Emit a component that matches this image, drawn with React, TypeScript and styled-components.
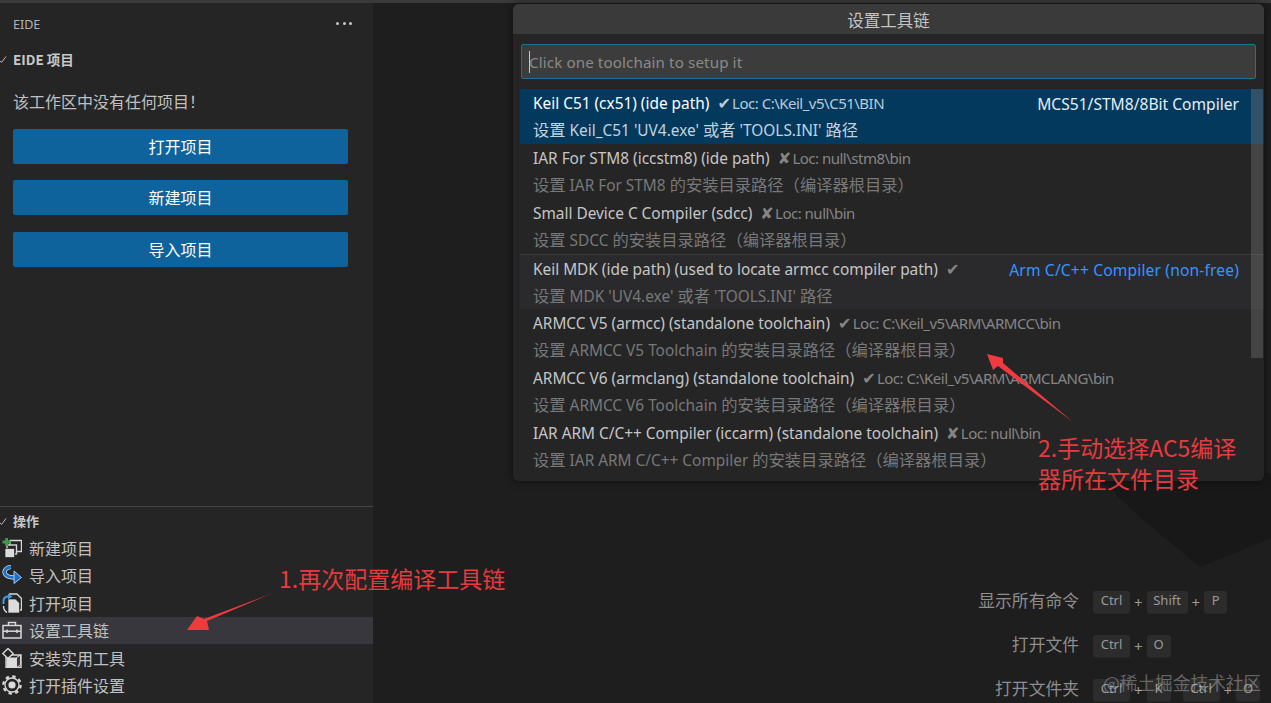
import React from "react";
import styled, { createGlobalStyle } from "styled-components";

const Global = createGlobalStyle`
  html, body, #root { margin: 0; padding: 0; width: 100%; height: 100%; overflow: hidden; background: #1e1e1e; }
  * { box-sizing: border-box; }
  body { font-family: "Noto Sans", "Noto Sans CJK SC", sans-serif; }
`;

const cjk = `"Noto Sans CJK SC", "Noto Sans", sans-serif`;

const Page = styled.div`
  position: relative; width: 1271px; height: 703px; overflow: hidden;
  display: flex; flex-direction: column; background: #1e1e1e;
`;
const TopStrip = styled.div`height: 3px; background: #3a3a3a; flex: none;`;
const Main = styled.div`flex: 1; display: flex; min-height: 0;`;
const Sidebar = styled.aside`
  width: 373px; flex: none; background: #252526; display: flex; flex-direction: column;
  justify-content: space-between; color: #cccccc;
`;
const SideHead = styled.div`
  height: 43px; padding: 0 21px 0 13px; display: flex; align-items: center; justify-content: space-between;
  color: #b4b4b4; font-size: 12.5px;
`;
const Dots = styled.div`
  display: flex; gap: 3.5px; margin-top: -2px;
  & i { width: 3px; height: 3px; border-radius: 50%; background: #c8c8c8; display: block; }
`;
const SectionHead = styled.div`
  height: 26px; display: flex; align-items: center; gap: 6px; font-size: 13.5px; font-weight: 700; color: #c8c8c8;
  font-family: ${cjk};
`;
const Caret = styled.svg`width: 7px; height: 8px; flex: none; margin-right: 0;`;
const Empty = styled.div`
  padding: 0 13px; margin-top: 16px; height: 27px; line-height: 27px; font-size: 16px; color: #c0c0c0; font-family: ${cjk};
`;
const Buttons = styled.div`
  margin: 14px 25px 0 13px; display: flex; flex-direction: column; gap: 16.4px;
`;
const Btn = styled.button`
  height: 35px; border: 0; border-radius: 2px; background: #0e639c; color: #fff; font-size: 16px;
  font-family: ${cjk}; padding: 0; line-height: 35px;
`;
const Ops = styled.div`border-top: 1px solid #454545; padding: 1px 0 4px;`;
const OpHead = styled(SectionHead)`height: 26.5px; font-size: 13px;`;
const OpRow = styled.div<{ $hover?: boolean }>`
  height: 27.5px; display: flex; align-items: center; gap: 7px; padding-left: 2px;
  background: ${(p) => (p.$hover ? "#37373d" : "transparent")};
  font-size: 16px; color: #c0c0c0; font-family: ${cjk};
`;
const OpIcon = styled.svg`width: 20px; height: 20px; flex: none;`;

const Editor = styled.main`flex: 1; position: relative; overflow: hidden; padding-top: 575px;`;
const LogoShade = styled.svg`position: absolute; left: 0; top: 0; width: 898px; height: 600px;`;
const KeyGrid = styled.div`
  position: relative; display: grid; grid-template-columns: 706px 1fr; column-gap: 14px; grid-auto-rows: 44px; align-items: center;
`;
const KeyLabel = styled.div`text-align: right; font-size: 16.8px; color: #8d8d8d; font-family: ${cjk};`;
const Keys = styled.div`display: flex; align-items: center; gap: 4px; color: #8d8d8d; font-size: 13px; margin-top: 4px;`;
const Plus = styled.span`font-size: 15px; color: #9a9a9a; line-height: 23px;`;
const Key = styled.kbd<{ $w: number }>`
  width: ${(p) => p.$w}px; height: 23px; line-height: 22px; text-align: center; background: #2c2c2d; border-radius: 3px;
  border-bottom: 1px solid #262626; font: inherit; color: #9a9a9a;
  &[data-gap] { margin-left: 8px; }
`;

const Picker = styled.section`
  position: absolute; left: 513px; top: 4px; width: 751px; height: 477px; background: #252526;
  border-radius: 6px; overflow: hidden; box-shadow: 0 0 8px rgba(0,0,0,.55); color: #cccccc;
`;
const PickTitle = styled.div`
  height: 30px; background: #3a3a3a; text-align: center; line-height: 33px; font-size: 16.5px; color: #c4c4c4; font-family: ${cjk};
`;
const InputBox = styled.div`
  margin: 10px 8px 0; height: 35px; background: #3c3c3c; border: 1px solid #1f6f9f; border-radius: 2px;
  display: flex; align-items: center; padding-left: 7px; font-size: 15.2px; color: #8a8a8a; letter-spacing: 0.1px;
`;
const Cursor = styled.span`width: 1px; height: 22px; background: #c8c8c8; margin-right: -1px;`;
const List = styled.div`margin-top: 10px; position: relative;`;
const Scroll = styled.div`
  position: absolute; right: 1px; top: 0; width: 12px; height: 269px; background: rgba(121,121,121,.38);
`;
const Item = styled.div<{ $sel?: boolean; $hover?: boolean }>`
  height: 55px; padding: 0 25px 0 13px; margin-left: 7px;
  background: ${(p) => (p.$sel ? "#04395e" : p.$hover ? "#2a2a2c" : "transparent")};
  border-top: ${(p) => (p.$hover ? "1px solid #3a3a3a" : "0")};
  display: grid; grid-template-columns: 1fr auto; grid-auto-rows: 27.5px; align-items: center;
`;
const Head = styled.div<{ $sel?: boolean }>`
  font-size: 15.4px; line-height: 20px; margin-top: 2px; white-space: nowrap; color: ${(p) => (p.$sel ? "#ffffff" : "#c6c6c6")};
`;
const Loc = styled.span<{ $sel?: boolean }>`
  font-size: 15px; letter-spacing: -0.5px; margin-left: 8px; color: ${(p) => (p.$sel ? "#b9cbd9" : "#858585")};
`;
const Mark = styled.span`font-family: "DejaVu Sans", sans-serif; font-size: 16px; line-height: 16px; margin-right: 1.3px; letter-spacing: 0;`;
const Right = styled.div<{ $blue?: boolean; $sel?: boolean }>`
  font-size: 15.6px; line-height: 20px; margin-top: 2px; white-space: nowrap; letter-spacing: ${(p) => (p.$blue ? "0.15px" : "0")};
  color: ${(p) => (p.$blue ? "#3794ff" : p.$sel ? "#e4eef5" : "#c6c6c6")};
`;
const Desc = styled.div<{ $sel?: boolean }>`
  grid-column: 1 / -1; font-size: 15.4px; line-height: 20px; white-space: nowrap; color: ${(p) => (p.$sel ? "#c3d3de" : "#787878")};
`;
const Zh = styled.span`font-family: ${cjk}; font-size: 16.3px; line-height: 20px;`;

const Note = styled.div<{ $l: number; $t: number }>`
  position: absolute; left: ${(p) => p.$l}px; top: ${(p) => p.$t}px; color: #e53a3e; font-size: 23px; line-height: 31px;
  font-family: ${cjk}; white-space: nowrap; pointer-events: none;
`;
const Arrow = styled.svg`position: absolute; left: 0; top: 0; width: 1271px; height: 703px; pointer-events: none;`;
const Watermark = styled.div`
  position: absolute; left: 1103px; top: 670px; font-size: 17.7px; line-height: 24px; color: rgba(200,200,200,.42); font-family: ${cjk}; white-space: nowrap;
`;

type Row = { name: string; st?: "ok" | "no"; loc?: string; right?: string; blue?: boolean; desc: React.ReactNode; sel?: boolean; hover?: boolean };

const rows: Row[] = [
  { name: "Keil C51 (cx51) (ide path)", st: "ok", loc: "Loc: C:\\Keil_v5\\C51\\BIN", right: "MCS51/STM8/8Bit Compiler", sel: true,
    desc: <><Zh>设置</Zh> Keil_C51 'UV4.exe' <Zh>或者</Zh> 'TOOLS.INI' <Zh>路径</Zh></> },
  { name: "IAR For STM8 (iccstm8) (ide path)", st: "no", loc: "Loc: null\\stm8\\bin",
    desc: <><Zh>设置</Zh> IAR For STM8 <Zh>的安装目录路径（编译器根目录）</Zh></> },
  { name: "Small Device C Compiler (sdcc)", st: "no", loc: "Loc: null\\bin",
    desc: <><Zh>设置</Zh> SDCC <Zh>的安装目录路径（编译器根目录）</Zh></> },
  { name: "Keil MDK (ide path) (used to locate armcc compiler path)", st: "ok", right: "Arm C/C++ Compiler (non-free)", blue: true, hover: true,
    desc: <><Zh>设置</Zh> MDK 'UV4.exe' <Zh>或者</Zh> 'TOOLS.INI' <Zh>路径</Zh></> },
  { name: "ARMCC V5 (armcc) (standalone toolchain)", st: "ok", loc: "Loc: C:\\Keil_v5\\ARM\\ARMCC\\bin",
    desc: <><Zh>设置</Zh> ARMCC V5 Toolchain <Zh>的安装目录路径（编译器根目录）</Zh></> },
  { name: "ARMCC V6 (armclang) (standalone toolchain)", st: "ok", loc: "Loc: C:\\Keil_v5\\ARM\\ARMCLANG\\bin",
    desc: <><Zh>设置</Zh> ARMCC V6 Toolchain <Zh>的安装目录路径（编译器根目录）</Zh></> },
  { name: "IAR ARM C/C++ Compiler (iccarm) (standalone toolchain)", st: "no", loc: "Loc: null\\bin",
    desc: <><Zh>设置</Zh> IAR ARM C/C++ Compiler <Zh>的安装目录路径（编译器根目录）</Zh></> },
];

const line = { fill: "none", stroke: "#d8d8d8", strokeWidth: 1.4, strokeLinejoin: "round" as const };

const icons: Record<string, React.ReactNode> = {
  add: (
    <>
      <rect x="8" y="2.5" width="11.5" height="11" {...line} />
      <rect x="5" y="7" width="9.5" height="9" fill="#252526" stroke="#d8d8d8" strokeWidth="1.4" />
      <rect x="3" y="10.5" width="9.5" height="9" fill="#dcdcdc" stroke="#252526" strokeWidth="0.7" />
      <path d="M3.2 0h2.8v2.6h2.7v2.8H6v2.6H3.2V5.4H0.5V2.6h2.7z" fill="#3f9b4b" />
    </>
  ),
  import: (
    <>
      <path d="M9 2C3 2.5 0.5 7.5 4.5 10.5 6.5 12 9.5 12.5 13 12.5" fill="none" stroke="#d6e4f0" strokeWidth="4.2" />
      <path d="M9 2C3 2.5 0.5 7.5 4.5 10.5 6.5 12 9.5 12.5 13 12.5" fill="none" stroke="#1f70c4" strokeWidth="2.8" />
      <path d="M12 6l7.5 6.5L12 18.5z" fill="#1f70c4" stroke="#d6e4f0" strokeWidth="0.8" strokeLinejoin="round" />
    </>
  ),
  open: (
    <>
      <path d="M7 1h8l4.5 4.5V17h-3" {...line} />
      <path d="M6 6h7.5l4 4v10H6z" fill="#dcdcdc" stroke="#252526" strokeWidth="0.7" />
      <path d="M1.5 11V8c0-3 2-4.5 5-4.5" fill="none" stroke="#4a9ade" strokeWidth="2" />
      <path d="M6 0.5l4.5 3L6 6.5z" fill="#4a9ade" />
      <path d="M1.5 13c0 3 1 5 3.5 6.5" {...line} />
    </>
  ),
  tool: (
    <>
      <rect x="1" y="5.5" width="18" height="12.5" fill="none" stroke="#d8d8d8" strokeWidth="1.5" />
      <path d="M6.5 5.5V2.5h7v3" fill="none" stroke="#d8d8d8" strokeWidth="1.5" />
      <path d="M1 11.2h18" stroke="#d8d8d8" strokeWidth="1.5" />
      <path d="M5 9.5v3.4M15 9.5v3.4" stroke="#d8d8d8" strokeWidth="1.5" />
    </>
  ),
  box: (
    <>
      <path d="M4 7h15v12.5H4z" fill="none" stroke="#d8d8d8" strokeWidth="1.4" />
      <path d="M4.5 9.5h10V19h-10z" fill="#dcdcdc" />
      <path d="M14.5 9.5l4-2.5v10l-4 2.5z" fill="#3a3a3a" stroke="#d8d8d8" strokeWidth="1" />
      <path d="M0.8 5.5L6 0.5l5.2 5L6 10.5z" fill="#252526" stroke="#d8d8d8" strokeWidth="1.4" strokeLinejoin="round" />
    </>
  ),
  gear: (
    <>
      <circle cx="10" cy="10" r="8.6" fill="none" stroke="#d8d8d8" strokeWidth="2.4" strokeDasharray="3.4 3.35" />
      <circle cx="10" cy="10" r="7" fill="#252526" stroke="#d8d8d8" strokeWidth="1.3" />
      <circle cx="10" cy="10" r="3.6" fill="#dcdcdc" />
    </>
  ),
};

const ops: { k: string; t: string; hover?: boolean }[] = [
  { k: "add", t: "新建项目" },
  { k: "import", t: "导入项目" },
  { k: "open", t: "打开项目" },
  { k: "tool", t: "设置工具链", hover: true },
  { k: "box", t: "安装实用工具" },
  { k: "gear", t: "打开插件设置" },
];

const CaretIcon = () => (
  <Caret viewBox="0 0 7 8"><path d="M0 6l1.6 1.4L6 1.5" fill="none" stroke="#bbbbbb" strokeWidth="1" /></Caret>
);

export default function App() {
  return (
    <Page>
      <Global />
      <TopStrip />
      <Main>
        <Sidebar>
          <div>
            <SideHead>
              <span>EIDE</span>
              <Dots><i /><i /><i /></Dots>
            </SideHead>
            <SectionHead><CaretIcon />EIDE 项目</SectionHead>
            <Empty>该工作区中没有任何项目！</Empty>
            <Buttons>
              <Btn>打开项目</Btn>
              <Btn>新建项目</Btn>
              <Btn>导入项目</Btn>
            </Buttons>
          </div>
          <Ops>
            <OpHead><CaretIcon />操作</OpHead>
            {ops.map((o) => (
              <OpRow key={o.k} $hover={o.hover}>
                <OpIcon viewBox="0 0 20 20">{icons[o.k]}</OpIcon>
                {o.t}
              </OpRow>
            ))}
          </Ops>
        </Sidebar>
        <Editor>
          <LogoShade viewBox="0 0 898 600">
            <polygon points="720,470 770,517 827,564 898,535 898,470" fill="#181818" />
          </LogoShade>
          <KeyGrid>
            <KeyLabel>显示所有命令</KeyLabel>
            <Keys><Key $w={37}>Ctrl</Key><Plus>+</Plus><Key $w={41}>Shift</Key><Plus>+</Plus><Key $w={23}>P</Key></Keys>
            <KeyLabel>打开文件</KeyLabel>
            <Keys><Key $w={37}>Ctrl</Key><Plus>+</Plus><Key $w={24}>O</Key></Keys>
            <KeyLabel>打开文件夹</KeyLabel>
            <Keys><Key $w={37}>Ctrl</Key><Plus>+</Plus><Key $w={24}>K</Key><Key $w={37} data-gap>Ctrl</Key><Plus>+</Plus><Key $w={24}>O</Key></Keys>
          </KeyGrid>
        </Editor>
      </Main>

      <Picker>
        <PickTitle>设置工具链</PickTitle>
        <InputBox><Cursor />Click one toolchain to setup it</InputBox>
        <List>
          {rows.map((r) => (
            <Item key={r.name} $sel={r.sel} $hover={r.hover}>
              <Head $sel={r.sel}>
                {r.name}
                <Loc $sel={r.sel}>
                  <Mark>{r.st === "ok" ? "✔" : "✘"}</Mark>
                  {r.loc}
                </Loc>
              </Head>
              <Right $blue={r.blue} $sel={r.sel}>{r.right}</Right>
              <Desc $sel={r.sel}>{r.desc}</Desc>
            </Item>
          ))}
          <Scroll />
        </List>
      </Picker>

      <Arrow viewBox="0 0 1271 703">
        <polygon points="273,593 207,621 209,630 187,630 197,616 204,619" fill="#ef3b3f" />
        <polygon points="1073,422 1003,363 1003,358 987,354 993,370 998,366" fill="#ef3b3f" />
      </Arrow>
      <Note $l={279} $t={563}>1.再次配置编译工具链</Note>
      <Note $l={1038} $t={432}>2.手动选择AC5编译<br />器所在文件目录</Note>
      <Watermark>@稀土掘金技术社区</Watermark>
    </Page>
  );
}
